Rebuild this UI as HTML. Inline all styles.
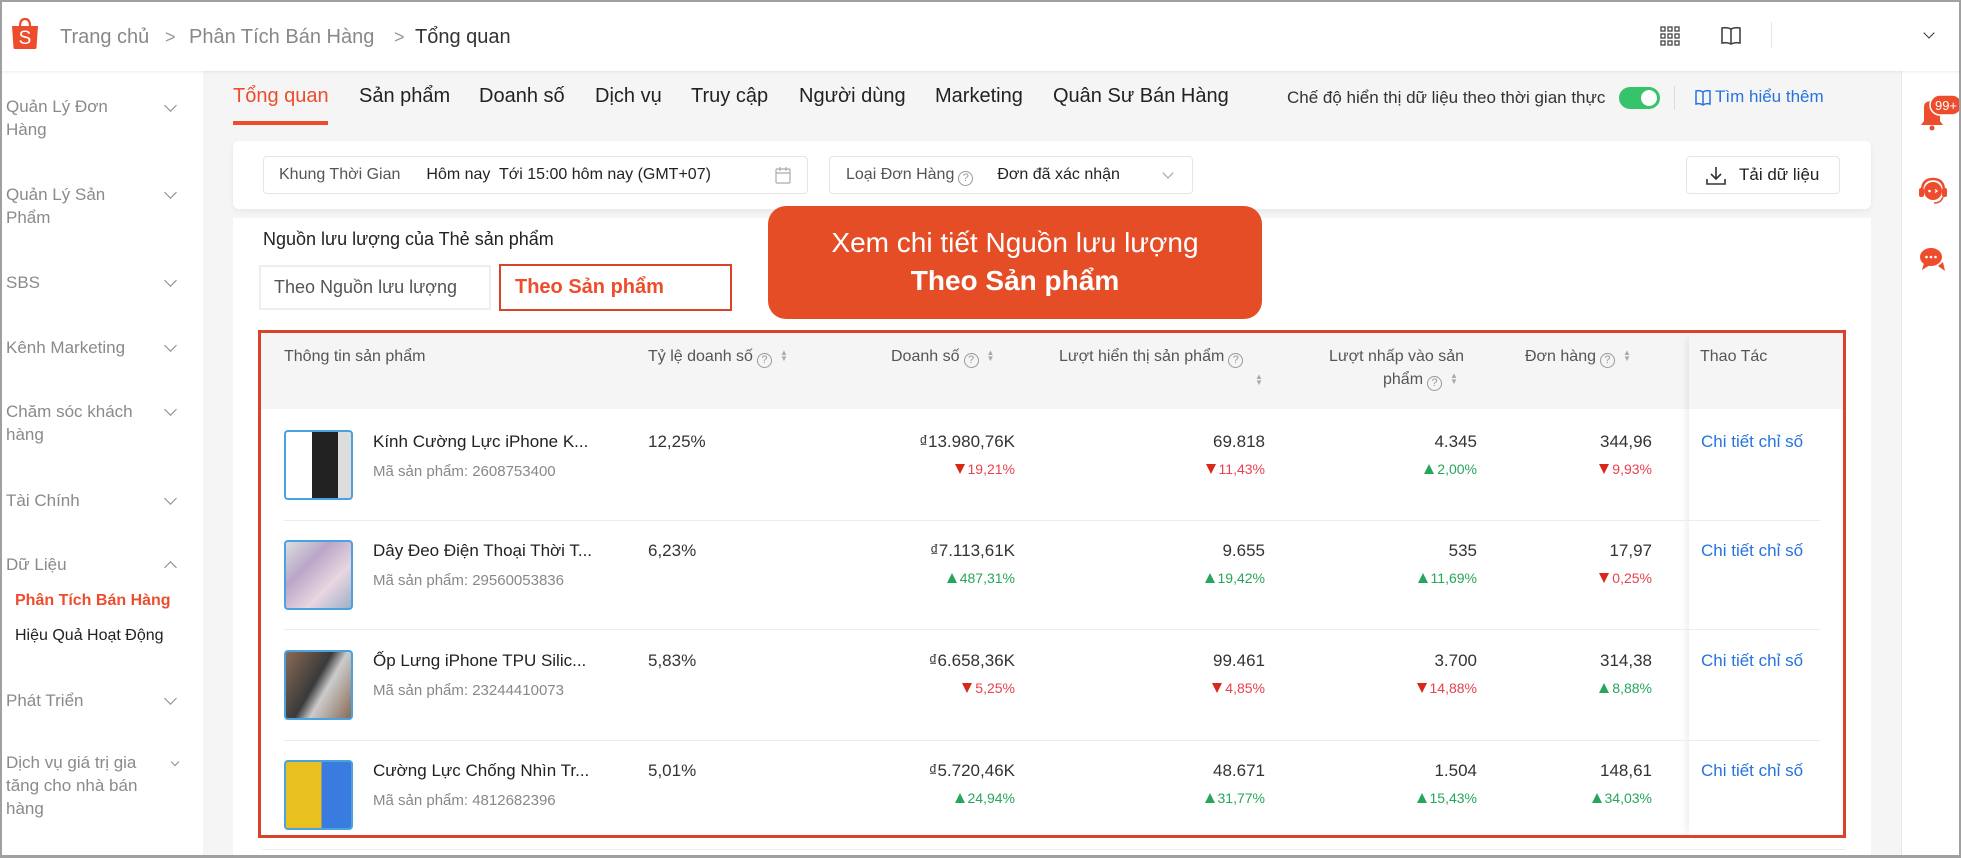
<!DOCTYPE html>
<html><head><meta charset="utf-8">
<style>
*{box-sizing:border-box;margin:0;padding:0}
body{width:1961px;height:858px;overflow:hidden;background:#f5f5f5;font-family:"Liberation Sans","Noto Sans CJK SC",sans-serif;position:relative;color:#333}
.a{position:absolute;white-space:nowrap}
.frame{position:absolute;left:0;top:0;width:1961px;height:858px;border:2px solid #a0a0a0;border-bottom-width:3px;pointer-events:none;z-index:50}
.hdr{position:absolute;left:0;top:0;width:1961px;height:71px;background:#fff;box-shadow:0 1px 3px rgba(0,0,0,.08);z-index:5}
.side{position:absolute;left:0;top:71px;width:203px;height:787px;background:#fff}
.side .it{position:absolute;left:6px;font-size:17px;color:#8a8a8a;line-height:23px;white-space:nowrap}
.chev{position:absolute;left:166px;width:9px;height:9px;border-right:1.5px solid #888;border-bottom:1.5px solid #888;transform:rotate(45deg)}
.rail{position:absolute;left:1901px;top:71px;width:60px;height:787px;background:#fff;border-left:1px solid #e8e8e8}
.tab{position:absolute;top:84px;font-size:20px;color:#222;line-height:24px}
.card{position:absolute;left:233px;top:141px;width:1638px;height:68px;background:#fff;border-radius:6px;box-shadow:0 2px 6px rgba(0,0,0,.06)}
.box{position:absolute;top:156px;height:38px;border:1px solid #e5e5e5;border-radius:4px;background:#fff;font-size:16px;line-height:36px;white-space:nowrap}
.panel{position:absolute;left:233px;top:218px;width:1638px;height:640px;background:#fff}
.th{position:absolute;font-size:16px;color:#555;line-height:22px;white-space:nowrap}
.q{display:inline-block;width:15px;height:15px;border:1px solid #999;border-radius:50%;font-size:11px;line-height:13px;text-align:center;color:#999;vertical-align:-2px;margin-left:4px}
.srt{display:inline-block;width:8px;margin-left:8px;font-size:8px;line-height:6px;color:#aaa;vertical-align:0px}
.v{position:absolute;font-size:17px;color:#333;text-align:right;line-height:22px;white-space:nowrap}
.c{position:absolute;font-size:14px;text-align:right;line-height:18px;white-space:nowrap}
.up{color:#26a65b}.dn{color:#e8414f}
.up:before{content:"";display:inline-block;border-left:5px solid transparent;border-right:5px solid transparent;border-bottom:10px solid #26a65b;margin-right:3px}
.dn:before{content:"";display:inline-block;border-left:5px solid transparent;border-right:5px solid transparent;border-top:10px solid #d8281a;margin-right:3px}
.nm{position:absolute;left:373px;font-size:17px;color:#222;line-height:22px;white-space:nowrap}
.cd{position:absolute;left:373px;font-size:15px;color:#888;line-height:20px;white-space:nowrap}
.pc{position:absolute;left:648px;font-size:17px;color:#333;line-height:22px}
.lk{position:absolute;left:1701px;font-size:17px;color:#2673dd;line-height:22px;white-space:nowrap}
.img{position:absolute;left:284px;width:69px;height:70px;border:2px solid #4aa3df;border-radius:4px}
.sep{position:absolute;left:284px;width:1536px;height:1px;background:#ececec}
</style></head><body>

<div class="hdr">
  <svg class="a" style="left:11px;top:17px" width="28" height="33" viewBox="0 0 28 33"><path d="M9 9 Q9 2 14 2 Q19 2 19 9" fill="none" stroke="#ee4d2d" stroke-width="2.2"/><path d="M1 9 H27 L25.5 31 Q25.4 32 24 32 H4 Q2.6 32 2.5 31 Z" fill="#ee4d2d"/><text x="14" y="27" font-size="19" fill="#fff" text-anchor="middle" font-family="Liberation Sans">S</text></svg>
  <div class="a" style="left:60px;top:25px;font-size:20px;color:#888;line-height:24px">Trang chủ</div>
  <div class="a" style="left:165px;top:25px;font-size:18px;color:#999;line-height:24px">&gt;</div>
  <div class="a" style="left:189px;top:25px;font-size:20px;color:#888;line-height:24px">Phân Tích Bán Hàng</div>
  <div class="a" style="left:394px;top:25px;font-size:18px;color:#999;line-height:24px">&gt;</div>
  <div class="a" style="left:415px;top:25px;font-size:20px;color:#333;line-height:24px">Tổng quan</div>
  <svg class="a" style="left:1660px;top:26px" width="20" height="20" viewBox="0 0 20 20"><g fill="none" stroke="#444" stroke-width="1.3"><rect x="1" y="1" width="4" height="4"/><rect x="8" y="1" width="4" height="4"/><rect x="15" y="1" width="4" height="4"/><rect x="1" y="8" width="4" height="4"/><rect x="8" y="8" width="4" height="4"/><rect x="15" y="8" width="4" height="4"/><rect x="1" y="15" width="4" height="4"/><rect x="8" y="15" width="4" height="4"/><rect x="15" y="15" width="4" height="4"/></g></svg>
  <svg class="a" style="left:1720px;top:25px" width="22" height="22" viewBox="0 0 22 22"><path d="M11 4 Q7 2 2 3 V18 Q7 17 11 19 Q15 17 20 18 V3 Q15 2 11 4 Z M11 4 V19" fill="none" stroke="#444" stroke-width="1.6"/></svg>
  <div class="a" style="left:1771px;top:22px;width:1px;height:26px;background:#e5e5e5"></div>
  <div class="a" style="left:1925px;top:29px;width:8px;height:8px;border-right:1.6px solid #333;border-bottom:1.6px solid #333;transform:rotate(45deg)"></div>
</div>

<div class="side">
  <div class="it" style="top:24px">Quản Lý Đơn<br>Hàng</div><div class="chev" style="top:30px"></div>
  <div class="it" style="top:112px">Quản Lý Sản<br>Phẩm</div><div class="chev" style="top:117px"></div>
  <div class="it" style="top:200px">SBS</div><div class="chev" style="top:205px"></div>
  <div class="it" style="top:265px">Kênh Marketing</div><div class="chev" style="top:270px"></div>
  <div class="it" style="top:329px">Chăm sóc khách<br>hàng</div><div class="chev" style="top:334px"></div>
  <div class="it" style="top:418px">Tài Chính</div><div class="chev" style="top:423px"></div>
  <div class="it" style="top:482px">Dữ Liệu</div><div class="chev" style="top:492px;transform:rotate(225deg)"></div>
  <div class="it" style="top:518px;left:15px;color:#ee4d2d;font-weight:bold;font-size:16px">Phân Tích Bán Hàng</div>
  <div class="it" style="top:553px;left:15px;color:#222;font-size:16px">Hiệu Quả Hoạt Động</div>
  <div class="it" style="top:618px">Phát Triển</div><div class="chev" style="top:623px"></div>
  <div class="it" style="top:680px">Dịch vụ giá trị gia<br>tăng cho nhà bán<br>hàng</div><div class="chev" style="top:688px;width:6px;height:6px;left:172px"></div>
</div>

<div class="rail">
  <svg class="a" style="left:14px;top:22px" width="46" height="40" viewBox="0 0 46 40"><path d="M8 14 Q8 8 16 8 Q24 8 24 14 V28 L27 32 H5 L8 28 Z" fill="#ee4d2d"/><circle cx="16" cy="35" r="2.5" fill="#ee4d2d"/><rect x="14" y="2" width="32" height="20" rx="10" fill="#ee4d2d" stroke="#fff" stroke-width="1.5"/><text x="30" y="17" font-size="13" fill="#fff" text-anchor="middle" font-family="Liberation Sans">99+</text></svg>
  <svg class="a" style="left:15px;top:104px" width="32" height="32" viewBox="0 0 32 32"><path d="M5 16 Q5 4 16 4 Q27 4 27 16" fill="none" stroke="#ee4d2d" stroke-width="2.5"/><circle cx="16" cy="16" r="9" fill="#ee4d2d"/><rect x="2" y="13" width="5" height="9" rx="2" fill="#ee4d2d"/><rect x="25" y="13" width="5" height="9" rx="2" fill="#ee4d2d"/><circle cx="12.5" cy="16" r="1.3" fill="#fff"/><path d="M18 14.5 L20 16 L18 17.5" stroke="#fff" stroke-width="1.3" fill="none"/><path d="M26 22 Q24 28 17 28" stroke="#ee4d2d" stroke-width="1.5" fill="none"/></svg>
  <svg class="a" style="left:16px;top:175px" width="30" height="28" viewBox="0 0 30 28"><ellipse cx="13" cy="11" rx="11" ry="9" fill="#ee4d2d"/><path d="M6 17 L4 24 L12 19 Z" fill="#ee4d2d"/><path d="M20 20 L27 25 L25 16" fill="#ee4d2d"/><circle cx="8.5" cy="11" r="1.3" fill="#fff"/><circle cx="13" cy="11" r="1.3" fill="#fff"/><circle cx="17.5" cy="11" r="1.3" fill="#fff"/></svg>
</div>

<div class="tab" style="left:233px;color:#ee4d2d">Tổng quan</div>
<div class="a" style="left:233px;top:121px;width:95px;height:4px;background:#ee4d2d"></div>
<div class="tab" style="left:359px">Sản phẩm</div>
<div class="tab" style="left:479px">Doanh số</div>
<div class="tab" style="left:595px">Dịch vụ</div>
<div class="tab" style="left:691px">Truy cập</div>
<div class="tab" style="left:799px">Người dùng</div>
<div class="tab" style="left:935px">Marketing</div>
<div class="tab" style="left:1053px">Quân Sư Bán Hàng</div>
<div class="a" style="left:1287px;top:87px;font-size:17px;color:#333;line-height:22px">Chế độ hiển thị dữ liệu theo thời gian thực</div>
<div class="a" style="left:1619px;top:87px;width:41px;height:22px;border-radius:11px;background:#35c46a"><div style="position:absolute;right:3px;top:3px;width:16px;height:16px;border-radius:50%;background:#fff"></div></div>
<div class="a" style="left:1674px;top:86px;width:1px;height:24px;background:#ddd"></div>
<svg class="a" style="left:1695px;top:89px" width="16" height="18" viewBox="0 0 16 18"><path d="M8 3 Q5 1 1 2 V15 Q5 14 8 16 Q11 14 15 15 V2 Q11 1 8 3 Z M8 3 V16" fill="none" stroke="#2673dd" stroke-width="1.5"/></svg>
<div class="a" style="left:1715px;top:86px;font-size:17px;color:#2673dd;line-height:22px">Tìm hiểu thêm</div>

<div class="panel"></div>
<div class="card"></div>
<div class="box" style="left:263px;width:545px;padding-left:15px;color:#555">Khung Thời Gian<span style="color:#222;margin-left:26px">Hôm nay&nbsp; Tới 15:00 hôm nay (GMT+07)</span>
<svg style="position:absolute;left:511px;top:10px" width="16" height="17" viewBox="0 0 16 17"><rect x="1" y="2" width="14" height="14" rx="1" fill="none" stroke="#aaa" stroke-width="1.2"/><path d="M1 6 H15 M5 0 V4 M11 0 V4" stroke="#aaa" stroke-width="1.2"/></svg></div>
<div class="box" style="left:829px;width:364px;padding-left:16px;color:#555">Loại Đơn Hàng<span class="q">?</span><span style="color:#222;margin-left:24px">Đơn đã xác nhận</span><span style="position:absolute;left:334px;top:12px;width:8px;height:8px;border-right:1.3px solid #999;border-bottom:1.3px solid #999;transform:rotate(45deg)"></span></div>
<div class="box" style="left:1686px;width:154px;padding-left:52px;color:#222;font-size:17px">Tải dữ liệu
<svg style="position:absolute;left:19px;top:9px" width="20" height="20" viewBox="0 0 20 20"><path d="M10 1 V13 M5 8 L10 13 L15 8 M1 13 V18 H19 V13" fill="none" stroke="#333" stroke-width="1.6"/></svg></div>

<div class="a" style="left:263px;top:228px;font-size:18px;color:#222;line-height:22px">Nguồn lưu lượng của Thẻ sản phẩm</div>
<div class="a" style="left:259px;top:265px;width:232px;height:45px;border:2px solid #eee;font-size:18px;color:#555;line-height:41px;padding-left:13px">Theo Nguồn lưu lượng</div>
<div class="a" style="left:499px;top:264px;width:233px;height:47px;border:2px solid #d9432a;font-size:20px;color:#ee4d2d;font-weight:bold;line-height:42px;padding-left:14px">Theo Sản phẩm</div>

<div class="a" style="left:768px;top:206px;width:494px;height:113px;background:#e44d26;border-radius:18px;color:#fff;text-align:center;font-size:28px;line-height:38px;padding-top:18px;white-space:normal">Xem chi tiết Nguồn lưu lượng<br><b>Theo Sản phẩm</b></div>

<!-- table -->
<div class="a" style="left:261px;top:333px;width:1582px;height:76px;background:#f5f5f5"></div>
<div class="a" style="left:1689px;top:333px;width:154px;height:505px;box-shadow:-6px 0 8px -4px rgba(0,0,0,.08)"></div>
<div class="th" style="left:284px;top:346px">Thông tin sản phẩm</div>
<div class="th" style="left:648px;top:346px">Tỷ lệ doanh số<span class="q">?</span><span class="srt">▲<br>▼</span></div>
<div class="th" style="left:891px;top:346px">Doanh số<span class="q">?</span><span class="srt">▲<br>▼</span></div>
<div class="th" style="left:1059px;top:346px">Lượt hiển thị sản phẩm<span class="q">?</span></div>
<div class="th" style="left:1247px;top:370px"><span class="srt">▲<br>▼</span></div>
<div class="th" style="left:1329px;top:346px">Lượt nhấp vào sản</div>
<div class="th" style="left:1383px;top:369px">phẩm<span class="q">?</span><span class="srt">▲<br>▼</span></div>
<div class="th" style="left:1525px;top:346px">Đơn hàng<span class="q">?</span><span class="srt">▲<br>▼</span></div>
<div class="th" style="left:1700px;top:346px">Thao Tác</div>

<div class="a" style="left:258px;top:330px;width:1588px;height:508px;border:3px solid #d9432a"></div>

<!-- rows -->
<div class="img" style="top:430px;background:linear-gradient(90deg,#fff 0 40%,#222 40% 80%,#ddd 80%)"></div>
<div class="nm" style="top:431px">Kính Cường Lực iPhone K...</div>
<div class="cd" style="top:462px">Mã sản phẩm: 2608753400</div>
<div class="pc" style="top:431px">12,25%</div>
<div class="v" style="right:946px;top:431px">₫13.980,76K</div><div class="c dn" style="right:946px;top:460px">19,21%</div>
<div class="v" style="right:696px;top:431px">69.818</div><div class="c dn" style="right:696px;top:460px">11,43%</div>
<div class="v" style="right:484px;top:431px">4.345</div><div class="c up" style="right:484px;top:460px">2,00%</div>
<div class="v" style="right:309px;top:431px">344,96</div><div class="c dn" style="right:309px;top:460px">9,93%</div>
<div class="lk" style="top:431px">Chi tiết chỉ số</div>
<div class="sep" style="top:520px"></div>

<div class="img" style="top:540px;background:linear-gradient(135deg,#ddd,#b9a6c8,#e8d6e0,#9fb0c8)"></div>
<div class="nm" style="top:540px">Dây Đeo Điện Thoại Thời T...</div>
<div class="cd" style="top:571px">Mã sản phẩm: 29560053836</div>
<div class="pc" style="top:540px">6,23%</div>
<div class="v" style="right:946px;top:540px">₫7.113,61K</div><div class="c up" style="right:946px;top:569px">487,31%</div>
<div class="v" style="right:696px;top:540px">9.655</div><div class="c up" style="right:696px;top:569px">19,42%</div>
<div class="v" style="right:484px;top:540px">535</div><div class="c up" style="right:484px;top:569px">11,69%</div>
<div class="v" style="right:309px;top:540px">17,97</div><div class="c dn" style="right:309px;top:569px">0,25%</div>
<div class="lk" style="top:540px">Chi tiết chỉ số</div>
<div class="sep" style="top:629px"></div>

<div class="img" style="top:650px;background:linear-gradient(120deg,#8a6a55,#3a3a3a 45%,#ccc 60%,#8a6a55)"></div>
<div class="nm" style="top:650px">Ốp Lưng iPhone TPU Silic...</div>
<div class="cd" style="top:681px">Mã sản phẩm: 23244410073</div>
<div class="pc" style="top:650px">5,83%</div>
<div class="v" style="right:946px;top:650px">₫6.658,36K</div><div class="c dn" style="right:946px;top:679px">5,25%</div>
<div class="v" style="right:696px;top:650px">99.461</div><div class="c dn" style="right:696px;top:679px">4,85%</div>
<div class="v" style="right:484px;top:650px">3.700</div><div class="c dn" style="right:484px;top:679px">14,88%</div>
<div class="v" style="right:309px;top:650px">314,38</div><div class="c up" style="right:309px;top:679px">8,88%</div>
<div class="lk" style="top:650px">Chi tiết chỉ số</div>
<div class="sep" style="top:740px"></div>

<div class="img" style="top:760px;background:linear-gradient(90deg,#e8c020 0 55%,#3a7be0 55%)"></div>
<div class="nm" style="top:760px">Cường Lực Chống Nhìn Tr...</div>
<div class="cd" style="top:791px">Mã sản phẩm: 4812682396</div>
<div class="pc" style="top:760px">5,01%</div>
<div class="v" style="right:946px;top:760px">₫5.720,46K</div><div class="c up" style="right:946px;top:789px">24,94%</div>
<div class="v" style="right:696px;top:760px">48.671</div><div class="c up" style="right:696px;top:789px">31,77%</div>
<div class="v" style="right:484px;top:760px">1.504</div><div class="c up" style="right:484px;top:789px">15,43%</div>
<div class="v" style="right:309px;top:760px">148,61</div><div class="c up" style="right:309px;top:789px">34,03%</div>
<div class="lk" style="top:760px">Chi tiết chỉ số</div>
<div class="a" style="left:263px;top:849px;width:1582px;height:1px;background:#ececec"></div>

<div class="frame"></div>
</body></html>
